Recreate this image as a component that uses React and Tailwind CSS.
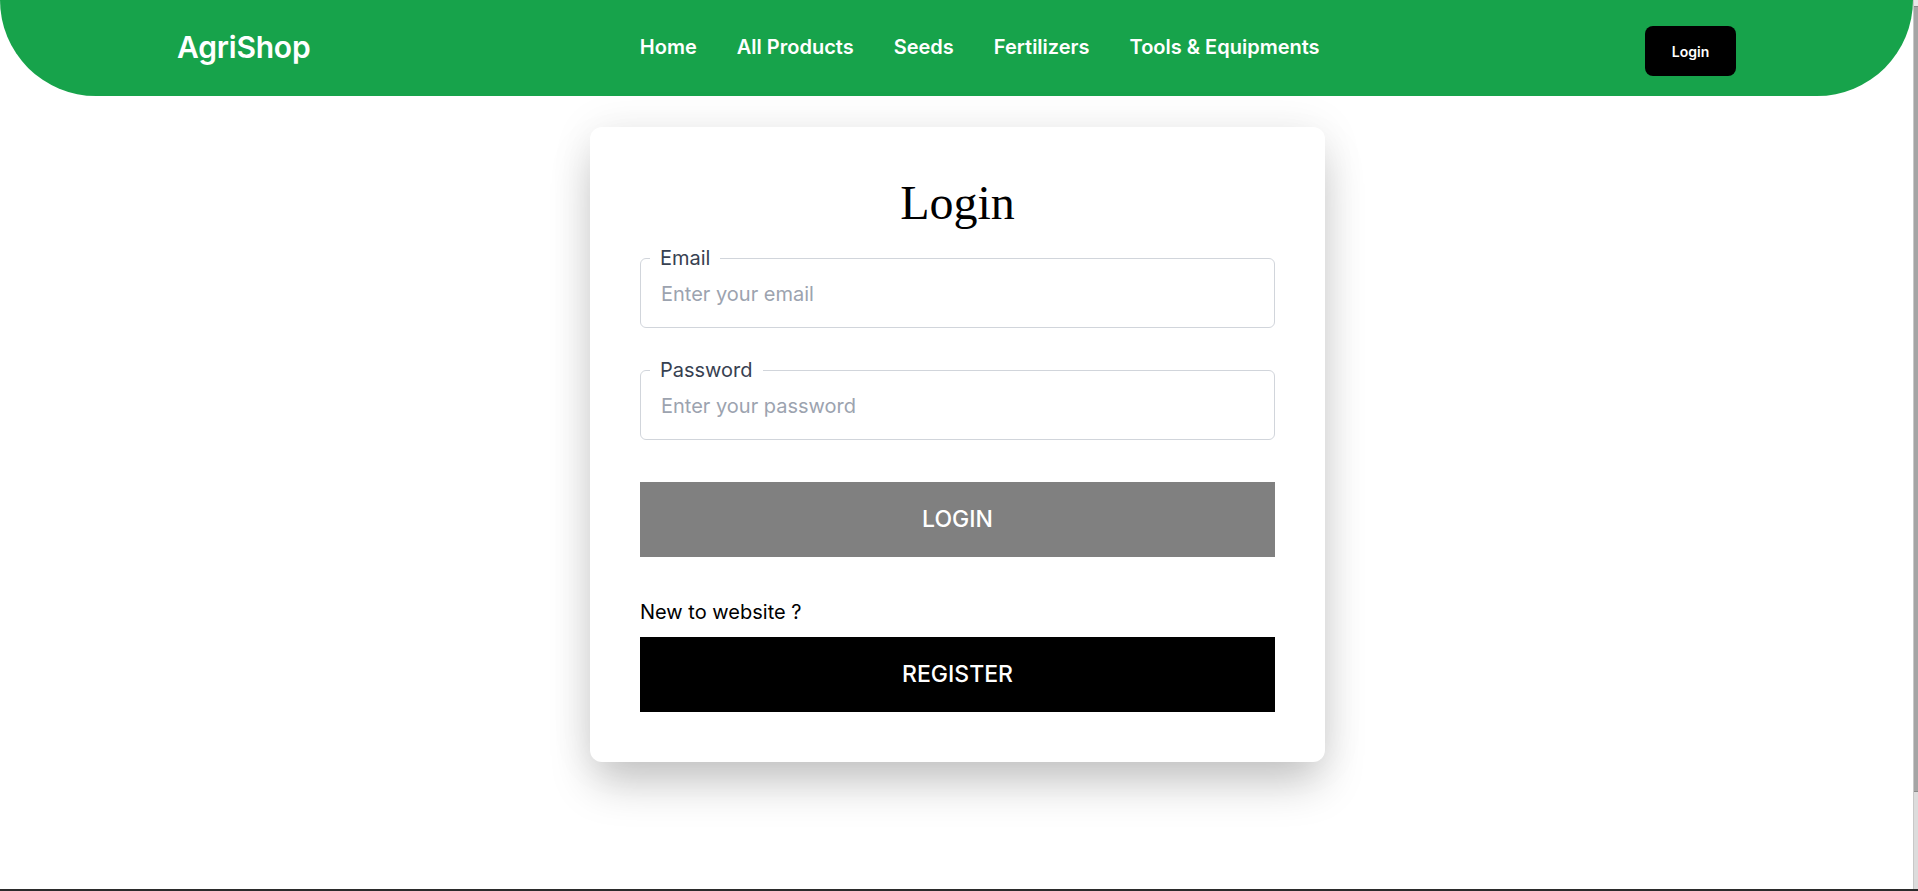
import React from "react";

const sans = "font-['Inter','Noto_Sans',sans-serif]";

function Field({ label, placeholder, type, className = "" }) {
  return (
    <fieldset className={`border border-[#d1d5db] rounded-md pl-[9px] pr-2 pb-[13px] ${className}`}>
      <legend className="px-2.5 text-[20px] leading-6 text-[#374151]">{label}</legend>
      <input
        type={type}
        placeholder={placeholder}
        className="block w-full h-[40px] mt-1 pl-[11px] pr-2.5 text-[20px] text-[#111827] outline-none bg-transparent placeholder:text-[#9ca3af]"
      />
    </fieldset>
  );
}

export default function App() {
  const links = ["Home", "All Products", "Seeds", "Fertilizers", "Tools & Equipments"];
  return (
    <div className={`h-[891px] flex flex-col bg-white overflow-hidden ${sans}`}>
      <div className="flex flex-1 min-h-0">
        <div className="flex-1 min-w-0 flex flex-col">
          <header className="h-[96px] bg-[#17a34b] rounded-b-[96px] flex items-start justify-between px-[177px]">
            <div className="mt-[29px] text-[30px] leading-[36px] font-semibold text-white tracking-[-0.2px]">
              AgriShop
            </div>
            <nav className="mt-[33px] flex gap-10 pl-[4px]">
              {links.map((l) => (
                <a key={l} className="text-[20px] leading-[28px] font-semibold text-white cursor-pointer">
                  {l}
                </a>
              ))}
            </nav>
            <button className="mt-[26px] w-[91px] h-[50px] rounded-lg bg-black text-white text-[14px] font-semibold">
              Login
            </button>
          </header>

          <div className="flex justify-center pt-[31px] pl-[2px]">
            <div className="w-[735px] bg-white rounded-xl px-[50px] pt-12 pb-[50px] shadow-[0_25px_45px_-5px_rgba(0,0,0,0.22),0_0_45px_rgba(0,0,0,0.07)]">
              <h1 className="text-center text-[48px] leading-[55px] text-black font-['Liberation_Serif','Times_New_Roman',serif] mb-[16px]">
                Login
              </h1>
              <Field label="Email" placeholder="Enter your email" type="email" />
              <Field label="Password" placeholder="Enter your password" type="password" className="mt-[30px]" />
              <button className="mt-[42px] w-full h-[75px] bg-[#808080] text-white text-[23px] font-medium">
                LOGIN
              </button>
              <p className="mt-[41px] text-[20px] leading-7 text-black">New to website ?</p>
              <button className="mt-[11px] w-full h-[75px] bg-black text-white text-[23px] font-medium">
                REGISTER
              </button>
            </div>
          </div>
        </div>
        <div className="w-[5px] flex flex-col bg-[#dcdcdc] border-l border-[#c8c8c8]">
          <div className="h-[6px] bg-[#e8e8e8]" />
          <div className="h-[786px] bg-[#a5a5a5] border-y border-[#8a8a8a]" />
        </div>
      </div>
      <div className="h-[2px] bg-[#2b2b2b]" />
    </div>
  );
}
